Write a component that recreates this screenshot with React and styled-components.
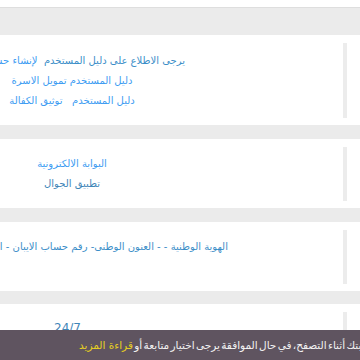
import React from "react";
import styled, { createGlobalStyle } from "styled-components";

const Global = createGlobalStyle`
  html, body { margin: 0; padding: 0; background: #ffffff; overflow: hidden; }
  body { font-family: "DejaVu Sans", "Noto Sans", sans-serif; }
`;

const Page = styled.div`
  width: 360px;
  height: 360px;
  overflow: hidden;
  padding-top: 7px;
  box-sizing: border-box;
`;

const Band = styled.div`
  height: ${(p) => p.$h}px;
  background: #ebebeb;
  border-top: ${(p) => (p.$top ? "1px solid #dedede" : "none")};
`;

const Body = styled.div`
  display: flex;
  padding: 8px 13px 7px 0;
`;

const Main = styled.div`
  flex: 1;
  display: flex;
  flex-direction: column;
  align-items: flex-start;
  padding: ${(p) => p.$pt}px 0 8px 0;
  min-height: ${(p) => p.$minH || 0}px;
  box-sizing: border-box;
`;

const Bar = styled.div`
  width: 4px;
  background: #ececec;
  align-self: stretch;
`;

const Line = styled.div`
  width: ${(p) => p.$w || 144}px;
  height: 20px;
  display: flex;
  justify-content: center;
  align-items: center;
`;

const Text = styled.span`
  direction: rtl;
  white-space: nowrap;
  font-size: ${(p) => p.$fs || 10}px;
  color: ${(p) => p.$c || "#3b8ec8"};
`;

const Cookie = styled.div`
  position: fixed;
  left: 0;
  right: 0;
  bottom: 0;
  height: 30px;
  background: #5f5460;
  display: flex;
  align-items: center;
  padding-left: 79px;
  overflow: hidden;
  white-space: nowrap;
  direction: ltr;
`;

const CookieText = styled.span`
  direction: rtl;
  font-size: 10.5px;
  word-spacing: -2px;
  color: #f2f2f2;
  white-space: nowrap;
`;

const More = styled.span`
  color: #e6cf22;
  word-spacing: 0;
`;

const LINK = "#3d9cf2";
const DARK = "#3b8ec8";

export default function App() {
  return (
    <Page>
      <Global />
      <Band $h={27} $top />
      <Body>
        <Main $pt={7}>
          <Line>
            <Text $c={DARK}>
              يرجى الاطلاع على دليل المستخدم{"\u00a0\u00a0"}
              <Text $c={LINK}>لإنشاء حساب جديد</Text>
            </Text>
          </Line>
          <Line>
            <Text $c={LINK}>دليل المستخدم تمويل الاسرة</Text>
          </Line>
          <Line>
            <Text $c={LINK}>دليل المستخدم{"\u00a0\u00a0\u00a0"}توثيق الكفالة</Text>
          </Line>
        </Main>
        <Bar />
      </Body>
      <Band $h={14} />
      <Body>
        <Main $pt={6}>
          <Line>
            <Text $c={LINK}>البوابة الالكترونية</Text>
          </Line>
          <Line>
            <Text $c="#3f86b8">تطبيق الجوال</Text>
          </Line>
        </Main>
        <Bar />
      </Body>
      <Band $h={14} />
      <Body>
        <Main $pt={6} $minH={54}>
          <Line $w={126}>
            <Text $c={DARK}>
              الهوية الوطنية - - العنون الوطنى- رقم حساب الايبان - الجوال - البريد الالكتروني
            </Text>
          </Line>
        </Main>
        <Bar />
      </Body>
      <Band $h={13} />
      <Body>
        <Main $pt={6} $minH={80}>
          <Line $w={135}>
            <Text $c="#3f86b8" $fs={12}>24/7</Text>
          </Line>
        </Main>
        <Bar />
      </Body>
      <Cookie>
        <CookieText>
          نستخدم ملفات تعريف الارتباط لتحسين تجربتك أثناء التصفح، في حال الموافقة يرجى اختيار متابعة أو{" "}
          <More>قراءة المزيد</More>
        </CookieText>
      </Cookie>
    </Page>
  );
}
